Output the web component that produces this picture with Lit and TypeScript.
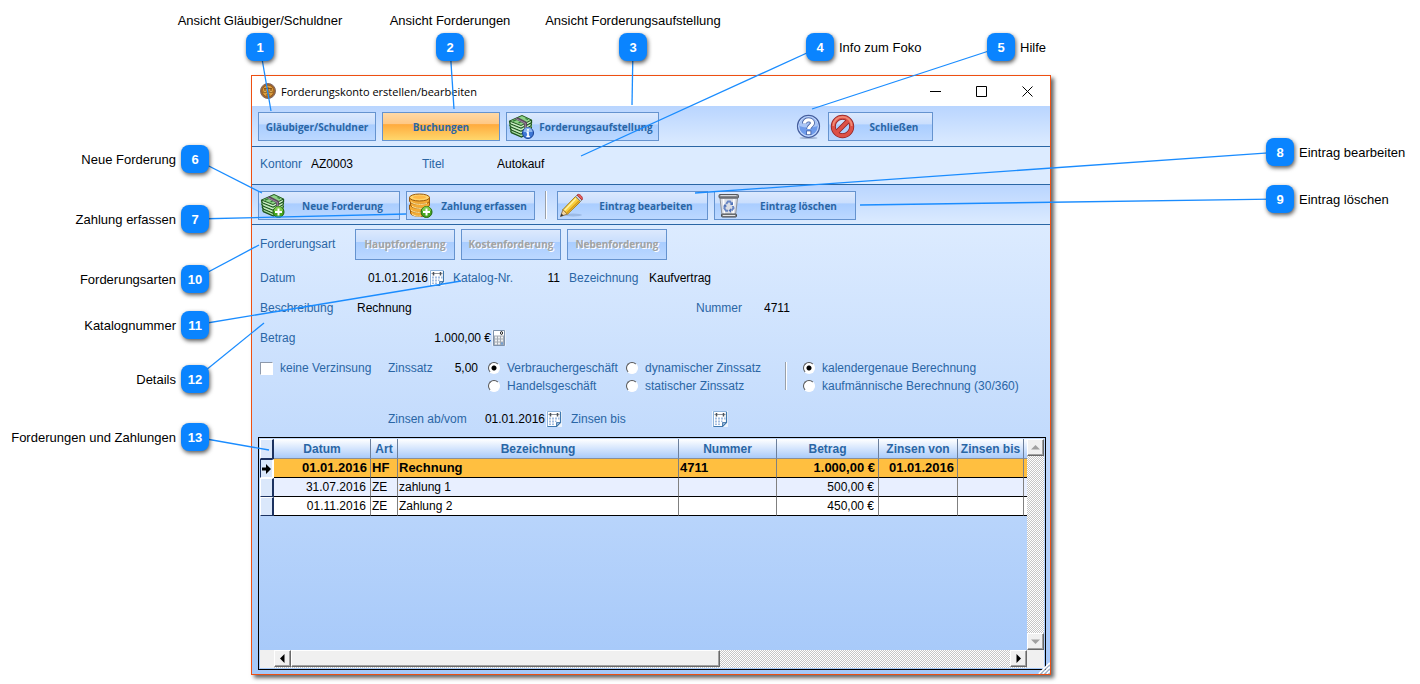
import { LitElement, html, css, svg, nothing, TemplateResult } from "lit";
import { customElement, property } from "lit/decorators.js";
import { classMap } from "lit/directives/class-map.js";
import { styleMap } from "lit/directives/style-map.js";

type Side = "top" | "left" | "right";
interface Callout {
  text: string;
  side: Side;
  x: number;
  y: number;
  tx: number;
  ty: number;
}

const CALLOUTS: Callout[] = [
  { text: "Ansicht Gläubiger/Schuldner", side: "top", x: 260, y: 47, tx: 271, ty: 111 },
  { text: "Ansicht Forderungen", side: "top", x: 450, y: 47, tx: 454, ty: 109 },
  { text: "Ansicht Forderungsaufstellung", side: "top", x: 633, y: 47, tx: 632, ty: 105 },
  { text: "Info zum Foko", side: "right", x: 820, y: 47, tx: 581, ty: 156 },
  { text: "Hilfe", side: "right", x: 1001, y: 47, tx: 812, ty: 109 },
  { text: "Neue Forderung", side: "left", x: 195, y: 159, tx: 262, ty: 193 },
  { text: "Zahlung erfassen", side: "left", x: 195, y: 219, tx: 406, ty: 214 },
  { text: "Eintrag bearbeiten", side: "right", x: 1280, y: 152, tx: 695, ty: 193 },
  { text: "Eintrag löschen", side: "right", x: 1280, y: 199, tx: 860, ty: 205 },
  { text: "Forderungsarten", side: "left", x: 195, y: 279, tx: 259, ty: 245 },
  { text: "Katalognummer", side: "left", x: 195, y: 325, tx: 461, ty: 281 },
  { text: "Details", side: "left", x: 195, y: 379, tx: 264, ty: 323 },
  { text: "Forderungen und Zahlungen", side: "left", x: 195, y: 437, tx: 269, ty: 450 },
];

/* A bundle of banknotes, shared by several toolbar icons. */
const notes = svg`
  <path d="M1 7L14 1L24 5.500V16L13.500 23L2.500 18.500Z" fill="#a9dfa2"/>
  <path d="M1.500 7L14 1.500L23.500 6L13 11.500Z" fill="#8fd487" stroke="#1c4a1c" stroke-width=".9"/>
  <path d="M1.500 7L2 9.500L13 14L23.500 8.500V6M1.500 10.500L2.500 12.700L13 17L23 11.500L23.500 9.500M2 13.500L3 15.700L13 20L23 14.500L23.500 12.500M2.500 16.500L3.500 18.700L13.500 23L23 17.500V15.500"
    fill="none" stroke="#1d5420" stroke-width="1.300"/>
  <path d="M3 9l10 4l9.500-5M3.500 12.200l9.500 3.800l9.500-5M4 15.200l9 3.800l9.500-5" fill="none" stroke="#e2f7dc" stroke-width=".8"/>
  <path d="M5 7.200l4-1.700M17.500 4.500l2.500 1M10.500 9l3-1.500" stroke="#2f7d33" stroke-width="1.300"/>
  <path d="M6.500 4.700L10 3.200L19 8V12.500L16 14V9.800Z" fill="#5b4a5c"/>
  <path d="M8 4.700L17.300 9.200V13" stroke="#a292a6" stroke-width=".9" fill="none"/>`;

const plus = svg`
  <circle cx="18.500" cy="19" r="5.500" fill="#47a51f" stroke="#24690f"/>
  <path d="M14 18a4.500 4.500 0 0 1 9 0z" fill="#7fcb4c"/>
  <path d="M18.500 15.500v7M15 19h7" stroke="#fff" stroke-width="2"/>`;

const ICONS: Record<string, TemplateResult> = {
  info: svg`${notes}
    <circle cx="20" cy="19" r="5.500" fill="#3f78d6" stroke="#173f93"/>
    <path d="M15.500 18a4.500 4.500 0 0 1 9 0z" fill="#8db7f2"/>
    <path d="M20 15v1.700M18.500 18.400H20V22.500M18.300 22.500h3.500" stroke="#fff" stroke-width="1.700" fill="none"/>`,
  neu: svg`${notes}${plus}`,
  coins: svg`
    <g fill="#f3ab35" stroke="#9b5a0c">
      <path d="M2.500 16v4c0 4.500 19 4.500 19 0v-4z"/>
      <path d="M1.500 12v4c0 4.500 19 4.500 19 0v-4z"/>
      <path d="M2.500 8v4c0 4.500 19 4.500 19 0V8z"/>
      <path d="M1.500 4.500V8c0 4.500 20 4.500 20 0V4.500z"/>
      <ellipse cx="11.500" cy="4.500" rx="10" ry="3.500" fill="#ffd46b"/>
    </g>
    <path d="M3 8.700c2 3 12 3.500 16 1.500M4 13c2 2.500 11 3 15 1.500M3 17c2 2.500 10 3 14 1.700M4 21c2 2 6 2.500 9 2" stroke="#ffe9a3" fill="none"/>
    <ellipse cx="11.500" cy="4.300" rx="6.500" ry="1.700" fill="#ffb947"/>
    ${plus}`,
  pencil: svg`
    <ellipse cx="14" cy="22" rx="9" ry="1.500" fill="#5b7ba8" opacity=".3"/>
    <path d="M1.500 23.500L4 16.500L8.500 21Z" fill="#f3d7a4" stroke="#806238" stroke-width=".8"/>
    <path d="M1.500 23.500l1-3l2 2z" fill="#333"/>
    <path d="M4 16.500L16.500 3.500L21.500 8.500L8.500 21.200Z" fill="#f8cf3c" stroke="#9b7410" stroke-width=".9"/>
    <path d="M5.500 17.500L17 5.500" stroke="#fff0a0" stroke-width="1.800"/>
    <path d="M7.800 20L20 8" stroke="#d99a1c" stroke-width="1.300"/>
    <path d="M16.500 3.500L18 2L23 7L21.500 8.500Z" fill="#c9ccd1" stroke="#747a82" stroke-width=".8"/>
    <path d="M18 2c2-2.500 7 2.500 5 5z" fill="#e86060" stroke="#a32d2d" stroke-width=".8"/>`,
  bin: svg`
    <path d="M4 5H21.500L19.500 22.500H6Z" fill="#d9dde5" stroke="#8c919b"/>
    <path d="M7.500 6l1 15M18 6l-1 15" stroke="#fff" stroke-width="1.500"/>
    <rect x="3" y="1.500" width="19.500" height="3.500" rx="1" fill="#85888d" stroke="#55585c"/>
    <path d="M4.500 2.500h16" stroke="#d6d8db"/>
    <rect x="5.500" y="21" width="15" height="3" rx="1" fill="#8b8e92" stroke="#494c50"/>
    <path d="M7 22.500h12" stroke="#e4e5e7"/>
    <path d="M10.200 11L12 8.500h2l1.800 2.500M16.800 13l.7 2l-2 2.700M12 17.700H10l-1.700-2.500l1-2.700" fill="none" stroke="#6886c4" stroke-width="2"/>
    <path d="M14 12h3V8.700zM15 15.200v4.600l-2.500-2.300zM7 13.500l2-2.800l2 2.800z" fill="#4f72b8"/>`,
  stop: svg`
    <circle cx="12.500" cy="12.500" r="9.200" fill="none" stroke="#8f2424" stroke-width="5"/>
    <path d="M6 19L19 6" stroke="#8f2424" stroke-width="5"/>
    <circle cx="12.500" cy="12.500" r="9.200" fill="none" stroke="#dd5147" stroke-width="3.400"/>
    <path d="M6 19L19 6" stroke="#dd5147" stroke-width="3.400"/>
    <path d="M3.300 12a9.200 9.200 0 0 1 18.400 0" fill="none" stroke="#f08a74" stroke-width="1.800"/>`,
  help: svg`
    <ellipse cx="12.500" cy="24" rx="9" ry="1" fill="#52698f" opacity=".4"/>
    <circle cx="12.500" cy="12.300" r="11" fill="#6f9bea" stroke="#475f9d" stroke-width="1.200"/>
    <circle cx="12.500" cy="12.300" r="9.800" fill="none" stroke="#c9dbfb" stroke-width="1.100"/>
    <path d="M3.300 12a9.200 9.200 0 0 1 18.400 0q-9 3-18.400 0z" fill="#a9c5f6"/>
    <path d="M8.500 9.500c0-5 8-4.500 8-.5c0 2.800-3.700 2.700-3.700 6" fill="none" stroke="#3e589a" stroke-width="4.800"/>
    <path d="M10.300 16.500h5v4.500h-5z" fill="#3e589a"/>
    <path d="M8.500 9.500c0-5 8-4.500 8-.5c0 2.800-3.700 2.700-3.700 6" fill="none" stroke="#fff" stroke-width="3.300"/>
    <path d="M11 17.300h3.500v3h-3.500z" fill="#fff"/>`,
};

const icon = (name: string) =>
  html`<svg class="icon" width="26" height="26" viewBox="0 0 26 26" fill="none" aria-hidden="true">${ICONS[name]}</svg>`;

const calendar = html`<svg width="16" height="16" viewBox="0 0 16 16" aria-hidden="true">
  <path d="M0 0h16v16H0z" fill="#eef4fc"/>
  <path d="M1.500.5h13v11l-4 4h-9z" fill="#fff" stroke="#8fb4dc"/>
  <path d="M14.500 1v10.500l-4 4H1.500" fill="none" stroke="#3f78ae" stroke-width="1.200"/>
  <path d="M14.500 11.500L10.500 15.500V11.500z" fill="#8fb4dc" stroke="#3a6ea0" stroke-width=".8"/>
  <path d="M2.500 3.500h11" stroke="#8d939b"/>
  <path d="M4.500 2v3.500M11.500 2v3.500" stroke="#4c5259" stroke-width="1.500"/>
  <path d="M3 6.500h2v2H3zM6 6.500h2v2H6zM9 6.500h2v2H9zM12 6.500h1.500v2H12zM3 9.500h2v2H3zM6 9.500h2v2H6zM9 9.500h1.500v1.500H9zM3 12.500h2V14H3zM6 12.500h2V14H6z" fill="#a3bde0"/>
</svg>`;

const calculator = html`<svg width="14" height="16" viewBox="0 0 14 16" aria-hidden="true">
  <path d="M0 0h14v16H0z" fill="#e9f0fa"/>
  <path d="M1.500.5h11v15h-11z" fill="#a5abb3" stroke="#7f93ad"/>
  <path d="M2 1h10v4.500H2z" fill="#fff"/>
  <ellipse cx="9.500" cy="3" rx="1" ry="1.500" fill="none" stroke="#222"/>
  <path d="M3 6.500h2v2H3zM6 6.500h2v2H6zM9 6.500h2v2H9zM3 9.500h2v2H3zM6 9.500h2v2H6zM9 9.500h2v2H9zM3 12.500h2v2H3zM6 12.500h2v2H6z" fill="#eef0f2"/>
  <path d="M9 12.500h2v2H9z" fill="#6fa0d8"/>
</svg>`;

const arrow = (d: string) => html`<svg width="9" height="9" viewBox="0 0 9 9" fill="currentColor" aria-hidden="true"><path d=${d}/></svg>`;

const reset = css`
  * { box-sizing: border-box; }
  button, input { font: inherit; color: inherit; margin: 0; padding: 0; border: 0; background: none; border-radius: 0; }
`;

@customElement("callout-pin")
export class CalloutPin extends LitElement {
  @property() text = "";
  @property() side: Side = "left";
  @property({ type: Number }) number = 0;

  static styles = css`
    :host {
      display: flex;
      align-items: center;
      justify-content: center;
      width: 28px;
      height: 28px;
      border-radius: 8px;
      background: #0a84ff;
      box-shadow: 1px 2px 4px rgba(0, 0, 0, 0.65);
      color: #fff;
      font-weight: bold;
    }
    .text { position: absolute; white-space: nowrap; font-weight: normal; color: #000; }
    .left { right: 100%; margin-right: 5px; }
    .right { left: 100%; margin-left: 5px; }
    .top { bottom: 100%; margin-bottom: 5px; }
  `;

  render() {
    return html`${this.number}<span class="text ${this.side}">${this.text}</span>`;
  }
}

@customElement("konto-grid")
export class KontoGrid extends LitElement {
  static styles = [
    reset,
    css`
      :host { display: grid; grid-template-columns: 1fr 17px; grid-template-rows: 1fr 18px; border: 1px solid #000; padding: 1px; }
      .view { overflow: hidden; }
      table { width: 100%; border-collapse: separate; border-spacing: 0; table-layout: fixed; }
      th, td { padding: 0 1px; height: 19px; line-height: 18px; white-space: nowrap; overflow: hidden; text-align: left; font-weight: normal; }
      td { border-right: 1px solid #808080; border-bottom: 1px solid #000; background: #fff; }
      thead th { height: 20px; text-align: center; font-weight: bold; color: #2a66a5; border-right: 1px solid #6c7f9c; border-bottom: 1px solid #8b8f96; background: linear-gradient(#fff, #d5e5fd 50%, #a9cbfb); }
      th.mark { padding: 0; color: #000; background: #dbe8fb; border: 1px solid #fff; border-right: 2px solid #1c3260; border-bottom: 1px solid #1c3260; }
      .current th.mark { border-color: #1c3260 #fff #fff #1c3260; }
      th.mark svg { display: block; margin: auto; }
      .num { text-align: right; padding-right: 4px; }
      .last { border-right: 0; }
      .odd td { background: #e8efff; }
      .current td { background: #ffbf40; font-weight: bold; font-size: 13px; }
      .current .num { padding-right: 3px; }
      .c0 { width: 14px; } .c1 { width: 97px; } .c2 { width: 27px; } .c3 { width: 281px; }
      .c4 { width: 98px; } .c5 { width: 102px; } .c6 { width: 79px; } .c7 { width: 66px; }
      .bar { display: flex; background: repeating-conic-gradient(#c6c6c6 0 25%, #fff 0 50%) 0 0 / 2px 2px; }
      .vertical { flex-direction: column; justify-content: space-between; }
      .filler { width: 14px; background: #f0f0f0; }
      .step, .thumb { background: #f0f0f0; border: 1px solid; border-color: #fff #696969 #696969 #fff; box-shadow: inset -1px -1px #a0a0a0; }
      .step { display: grid; place-items: center; width: 17px; height: 17px; flex: none; }
      .step.off { color: #a0a0a0; }
      .thumb { width: 429px; height: 17px; }
      .space { flex: 1; }
      .corner { background: #f0f0f0; }
    `,
  ];

  private rows = [
    ["01.01.2016", "HF", "Rechnung", "4711", "1.000,00 €", "01.01.2016", ""],
    ["31.07.2016", "ZE", "zahlung 1", "", "500,00 €", "", ""],
    ["01.11.2016", "ZE", "Zahlung 2", "", "450,00 €", "", ""],
  ];
  private heads = ["Datum", "Art", "Bezeichnung", "Nummer", "Betrag", "Zinsen von", "Zinsen bis"];

  render() {
    return html`
      <div class="view">
        <table>
          <colgroup>${[0, 1, 2, 3, 4, 5, 6, 7, 8].map((n) => html`<col class="c${n}" />`)}</colgroup>
          <thead>
            <tr><th class="mark"></th>${this.heads.map((h) => html`<th scope="col">${h}</th>`)}<th class="last"></th></tr>
          </thead>
          <tbody>
            ${this.rows.map(
              (row, i) => html`<tr class=${classMap({ current: i === 0, odd: i === 1 })}>
                <th class="mark">
                  ${i === 0 ? html`<svg width="9" height="10" viewBox="0 0 9 10" aria-hidden="true"><path d="M0 3.500h4V0l5 5l-5 5V6.500H0z" /></svg>` : nothing}
                </th>
                ${row.map((cell, c) => html`<td class=${classMap({ num: c === 0 || c === 4 || c === 5 })}>${cell}</td>`)}
                <td class="last"></td>
              </tr>`
            )}
          </tbody>
        </table>
      </div>
      <div class="bar vertical">
        <button class="step off" aria-label="Nach oben">${arrow("M0 6.500L4.500 2L9 6.500z")}</button>
        <button class="step off" aria-label="Nach unten">${arrow("M0 2.500L4.500 7L9 2.500z")}</button>
      </div>
      <div class="bar">
        <span class="filler"></span>
        <button class="step" aria-label="Nach links">${arrow("M6.500 0L2 4.500L6.500 9z")}</button>
        <span class="thumb"></span>
        <span class="space"></span>
        <button class="step" aria-label="Nach rechts">${arrow("M2.500 0L7 4.500L2.500 9z")}</button>
      </div>
      <span class="corner"></span>
    `;
  }
}

@customElement("konto-window")
export class KontoWindow extends LitElement {
  static styles = [
    reset,
    css`
      :host { display: flex; flex-direction: column; position: relative; border: 1px solid #ee4f12; background: linear-gradient(#dcebff 25%, #a5c8f9); box-shadow: 3px 3px 4px rgba(0, 0, 0, 0.6); color: #2a66a5; font-size: 12px; }
      .title { display: flex; align-items: center; height: 30px; padding-left: 8px; background: #fff; color: #000; }
      .title h1 { flex: 1; margin: 0 0 0 5px; font: 11px "Open Sans", sans-serif; }
      .title button { display: grid; place-items: center; width: 46px; height: 30px; }
      .tools { display: flex; gap: 6px; padding: 6px 6px 5px; background: linear-gradient(#b9d5ff, #dcebff); border-bottom: 1px solid #2a66a5; }
      .tools.actions { padding-bottom: 4px; }
      .info { display: flex; align-items: center; height: 38px; padding: 0 8px 2px; background: #dcebff; border-bottom: 1px solid #2a66a5; }
      .info .account { width: 51px; }
      .info .heading { width: 75px; margin-left: 40px; }
      .btn { display: flex; align-items: center; height: 29px; border: 1px solid #6593cf; background: linear-gradient(#dce9fd, #c9defd 42%, #a9cdff 43%, #bcd8ff); font: bold 10px "Open Sans", sans-serif; color: #2a66a5; white-space: nowrap; }
      .btn .label { flex: 1; text-align: center; }
      .btn .icon { flex: none; margin-left: 1px; }
      .btn.active { background: linear-gradient(#ffd9a6, #ffc884 40%, #ffab3d 43%, #ffd76c); }
      .btn:disabled { width: 100px; height: 31px; color: #a3a3a3; text-shadow: 1px 1px #fff; }
      .w118 { width: 118px; } .w129 { width: 129px; } .w142 { width: 142px; } .w151 { width: 151px; } .w153 { width: 153px; } .w105 { width: 105px; }
      .help { display: grid; place-items: center; width: 26px; margin-left: 131px; }
      .rule { width: 2px; border-left: 1px solid #9aa0a8; border-right: 1px solid #fff; }
      .tools .rule { margin: 0 4px; height: 28px; }
      form { display: flex; flex-direction: column; flex: 1; }
      .row { display: flex; align-items: center; height: 30px; padding: 0 8px; }
      .kinds { height: 38px; gap: 6px; }
      .kinds .name { width: 89px; }
      .name { width: 97px; flex: none; }
      .name.tight { width: 80px; }
      .name.short { width: 68px; }
      input[type="text"] { color: #000; width: 71px; min-width: 0; outline: 0; }
      input.right { text-align: right; }
      input.code { width: 27px; }
      input.sum { width: 134px; }
      input.wide { width: 339px; }
      .pick { display: grid; width: 16px; margin: 0 8px 0 1px; flex: none; }
      .name.gap { margin-left: 9px; }
      .interest { display: flex; padding: 6px 8px 0; line-height: 18px; }
      .interest .name { width: 58px; }
      .interest input[type="text"] { width: 32px; height: 18px; }
      .opt { display: flex; align-items: center; gap: 7px; height: 18px; white-space: nowrap; }
      .check { width: 128px; }
      .group { width: 138px; margin-left: 10px; }
      .group + .group { width: 159px; margin-left: 0; }
      .group.last { width: auto; margin-left: 16px; }
      .opt input { appearance: none; width: 12px; height: 12px; flex: none; background: #fff; }
      .opt input[type="radio"] { border-radius: 50%; border: 1px solid; border-color: #555 #fff #fff #555; }
      .opt input[type="radio"]:checked { background: radial-gradient(circle, #000 2px, #fff 3px); }
      .opt input[type="checkbox"] { width: 13px; height: 13px; border: 1px solid; border-color: #8d99ab #fff #fff #8d99ab; }
      .interest .rule { height: 28px; margin-top: 3px; }
      .period { height: 48px; padding-left: 136px; }
      .period .name { width: 95px; }
      .period input[type="text"] { width: 62px; }
      .period .until { width: 80px; margin-left: 1px; }
      .period input.end[type="text"] { width: 60px; }
      konto-grid { flex: 1; margin: -6px 4px 4px 6px; color: #000; }
      .grip { position: absolute; right: 0; bottom: 0; }
    `,
  ];

  private button(label: string, width: string, name?: string, active = false) {
    return html`<button type="button" class="btn ${width} ${active ? "active" : ""}">
      ${name ? icon(name) : nothing}<span class="label">${label}</span>
    </button>`;
  }

  private radio(group: string, label: string, checked = false) {
    return html`<label class="opt"><input type="radio" name=${group} ?checked=${checked} />${label}</label>`;
  }

  render() {
    return html`
      <header class="title">
        <svg width="16" height="16" viewBox="0 0 16 16" aria-hidden="true">
          <circle cx="8" cy="8" r="7.500" fill="#a5652a" stroke="#7d6a68" />
          <circle cx="8" cy="8" r="5.800" fill="#dc9c3c" stroke="#8a5820" stroke-width=".7" />
          <path d="M8 4v8M4 5.500h8M6 12h4" stroke="#7c4a16" stroke-width=".9" />
          <path d="M5 6l-1.500 3.500h3zM11 6L9.500 9.500h3z" stroke="#7c4a16" stroke-width=".7" fill="#ffd67a" />
        </svg>
        <h1>Forderungskonto erstellen/bearbeiten</h1>
        <button aria-label="Minimieren"><svg width="11" height="11"><path d="M0 5.500h11" stroke="#000" /></svg></button>
        <button aria-label="Maximieren"><svg width="11" height="11"><path d="M.5.5h10v10H.5z" stroke="#000" fill="none" /></svg></button>
        <button aria-label="Fenster schließen"><svg width="11" height="11"><path d="M.5.5l10 10M10.500.5l-10 10" stroke="#000" /></svg></button>
      </header>
      <nav class="tools">
        ${this.button("Gläubiger/Schuldner", "w118")}
        ${this.button("Buchungen", "w118", undefined, true)}
        ${this.button("Forderungsaufstellung", "w153", "info")}
        <button class="help" aria-label="Hilfe">${icon("help")}</button>
        ${this.button("Schließen", "w105", "stop")}
      </nav>
      <section class="info">
        <label for="konto" class="account">Kontonr</label>
        <input id="konto" type="text" value="AZ0003" />
        <label for="titel" class="heading">Titel</label>
        <input id="titel" type="text" value="Autokauf" />
      </section>
      <div class="tools actions">
        ${this.button("Neue Forderung", "w142", "neu")}
        ${this.button("Zahlung erfassen", "w129", "coins")}
        <span class="rule"></span>
        ${this.button("Eintrag bearbeiten", "w151", "pencil")}
        ${this.button("Eintrag löschen", "w142", "bin")}
      </div>
      <form>
        <div class="row kinds">
          <span class="name">Forderungsart</span>
          ${["Hauptforderung", "Kostenforderung", "Nebenforderung"].map(
            (k) => html`<button type="button" class="btn" disabled><span class="label">${k}</span></button>`
          )}
        </div>
        <div class="row">
          <label class="name" for="datum">Datum</label>
          <input id="datum" class="right" type="text" value="01.01.2016" />
          <button type="button" class="pick" aria-label="Datum wählen">${calendar}</button>
          <label class="name tight" for="katalog">Katalog-Nr.</label>
          <input id="katalog" class="right code" type="text" value="11" />
          <label class="name tight gap" for="bez">Bezeichnung</label>
          <input id="bez" type="text" value="Kaufvertrag" />
        </div>
        <div class="row">
          <label class="name" for="text">Beschreibung</label>
          <input id="text" class="wide" type="text" value="Rechnung" />
          <label class="name short" for="nummer">Nummer</label>
          <input id="nummer" type="text" value="4711" />
        </div>
        <div class="row">
          <label class="name" for="betrag">Betrag</label>
          <input id="betrag" class="right sum" type="text" value="1.000,00 €" />
          <button type="button" class="pick" aria-label="Rechner">${calculator}</button>
        </div>
        <div class="interest">
          <label class="opt check"><input type="checkbox" />keine Verzinsung</label>
          <label class="name" for="satz">Zinssatz</label>
          <input id="satz" class="right" type="text" value="5,00" />
          <div class="group">${this.radio("art", "Verbrauchergeschäft", true)}${this.radio("art", "Handelsgeschäft")}</div>
          <div class="group">${this.radio("zins", "dynamischer Zinssatz")}${this.radio("zins", "statischer Zinssatz")}</div>
          <span class="rule"></span>
          <div class="group last">
            ${this.radio("tage", "kalendergenaue Berechnung", true)}${this.radio("tage", "kaufmännische Berechnung (30/360)")}
          </div>
        </div>
        <div class="row period">
          <label class="name" for="ab">Zinsen ab/vom</label>
          <input id="ab" class="right" type="text" value="01.01.2016" />
          <button type="button" class="pick" aria-label="Beginn wählen">${calendar}</button>
          <label class="until" for="bis">Zinsen bis</label>
          <input id="bis" class="end" type="text" value="" />
          <button type="button" class="pick" aria-label="Ende wählen">${calendar}</button>
        </div>
        <konto-grid></konto-grid>
      </form>
      <svg class="grip" width="12" height="12" viewBox="0 0 12 12" aria-hidden="true">
        <path d="M1 12L12 1M5 12l7-7M9 12l3-3" stroke="#fff" stroke-width="2" />
        <path d="M2.500 12L12 2.500M6.500 12L12 6.500M10.500 12l1.500-1.500" stroke="#8e949c" />
      </svg>
    `;
  }
}

@customElement("app-root")
export class AppRoot extends LitElement {
  static styles = css`
    :host { display: block; position: relative; box-sizing: border-box; min-height: 684px; padding: 75px 0 9px 251px; background: #fff; font: 13px/15px "Liberation Sans", Arial, sans-serif; color: #000; overflow: hidden; }
    konto-window { width: 100%; max-width: 800px; min-height: 600px; box-sizing: border-box; }
    .lines { position: absolute; left: 0; top: 0; width: 100%; height: 100%; pointer-events: none; }
    callout-pin { position: absolute; margin: -14px 0 0 -14px; }
  `;

  render() {
    return html`
      <konto-window></konto-window>
      <svg class="lines" aria-hidden="true">
        ${CALLOUTS.map((c) => svg`<line x1=${c.x} y1=${c.y} x2=${c.tx} y2=${c.ty} stroke="#1a8cff" stroke-width="1.300"/>`)}
      </svg>
      ${CALLOUTS.map(
        (c, i) => html`<callout-pin .number=${i + 1} .text=${c.text} .side=${c.side} style=${styleMap({ left: `${c.x}px`, top: `${c.y}px` })}></callout-pin>`
      )}
    `;
  }
}
